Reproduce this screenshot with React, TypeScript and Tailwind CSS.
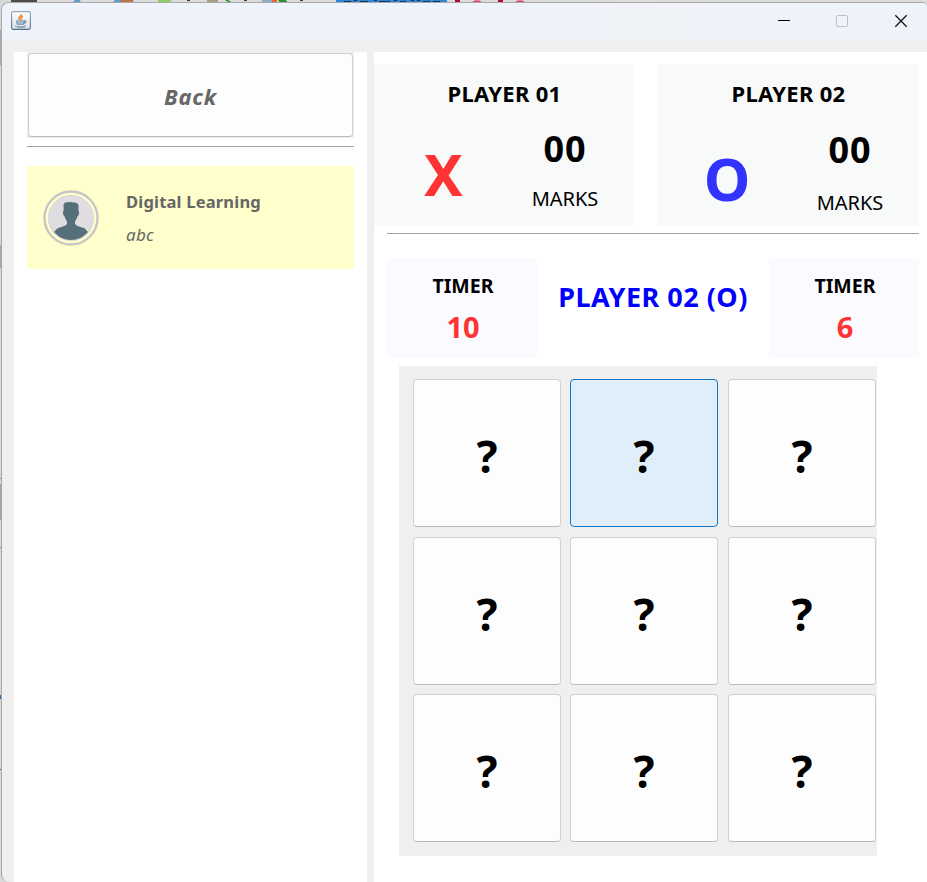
const FONT = "font-['Segoe_UI','Noto_Sans',sans-serif]";

function JavaIcon() {
  return (
    <svg width="20" height="20" viewBox="0 0 20 20" fill="none">
      <defs>
        <linearGradient id="jb" x1="0" y1="0" x2="0" y2="1">
          <stop offset="0" stopColor="#8fa9bd" />
          <stop offset="1" stopColor="#4f6b80" />
        </linearGradient>
        <linearGradient id="jf" x1="0" y1="0" x2="0" y2="1">
          <stop offset="0" stopColor="#ffffff" />
          <stop offset="1" stopColor="#dcdfe2" />
        </linearGradient>
      </defs>
      <rect x="0.6" y="0.6" width="18.8" height="17.8" rx="1.6" fill="url(#jf)" stroke="url(#jb)" strokeWidth="1.1" />
      <path d="M10.400 3.200c.6 1.800-3.400 2.600-2.600 4.400.2.600.8 1 1.200 1.500M12 5.200c-1.600.6-2.600 1.300-1.800 2.400.4.600.2 1.100-.4 1.600" stroke="#ee8a3c" strokeWidth="1.600" />
      <path d="M5.600 10h7.600l-.6 3.200H6.400zM13.200 9.800c2-.5 2.200 1.900-.4 2.400" stroke="#6d8ea8" strokeWidth="1.200" />
      <path d="M6 11.600h6.600" stroke="#9db5c6" strokeWidth="1.400" />
      <path d="M4 14.800c1.600 1.300 8.800 1.300 10.800-.2M6.400 16.200c3 .4 6 .3 8.400-.4" stroke="#7f9cb3" strokeWidth="1" />
    </svg>
  );
}

function Avatar() {
  return (
    <svg width="56" height="56" viewBox="0 0 56 56">
      <circle cx="28" cy="28" r="26.500" fill="#ffffcc" stroke="#c6c6c6" strokeWidth="2.400" />
      <circle cx="28" cy="28" r="22.700" fill="#e0dde1" stroke="#cfcccf" strokeWidth="0.600" />
      <path
        d="M20.500 14.500L22 12.600L26 12L32 12.400L34.600 13.500L35.600 16L35.300 20.500L36.200 22L35.700 25L34.400 26.500L33.300 29.500L32 31.500V34L34 35.800L41.500 38.200L45 42C40.500 47 35 50 28 50S15.500 47 11 42L14.500 38.200L22 35.800L24 34V31.500L22.700 29.500L21.600 26.500L20.300 25L19.800 22L20.700 20.500Z"
        fill="#56707b"
      />
    </svg>
  );
}

function Backdrop() {
  return (
    <svg className="absolute inset-0" width="927" height="882">
      <rect width="927" height="882" fill="#d8d8d8" />
      <rect x="11" width="26" height="3" fill="#4b4b4b" />
      <rect x="37" width="900" height="3" fill="#dcdcdc" />
      <path d="M72 3l3-3h5l1 3zM112 3l3-3h6v3z" fill="#5f9cc8" />
      <path d="M121 0h12l1 3h-14z" fill="#b9744a" />
      <path d="M158 0h14l-3 3h-11z" fill="#8fcd6a" />
      <path d="M207 0h11v3h-11z" fill="#a99f80" />
      <path d="M225 0l4 3h4l-5-3zM278 0h8l2 3h-8z" fill="#2f9232" />
      <path d="M262 0h15v3h-15z" fill="#91adc3" />
      <path d="M272 0h5v2h-5z" fill="#ee6432" />
      <path d="M187 0h3v1h-3zM244 0h3v1h-3zM300 0h3v1h-3z" fill="#333" />
      <rect x="336" width="111" height="3" fill="#2f86d6" />
      <path d="M344 1.500h7M354 0.500h3M360 1.500h8M374 0.500h3M379 1.500h11M394 0.500h3M400 1.500h6M411 0.500h3M417 0.500h3M423 1.500h7M433 1.500h7" stroke="#15324f" strokeWidth="1" />
      <path d="M455 0h5v3h-5zM498 0h5v3h-5z" fill="#b1093c" />
      <path d="M472 3q5-4 10 0M515 3q5-4 10 0" stroke="#d83a5d" strokeWidth="1.500" fill="none" />
      <rect y="30" width="2" height="35" fill="#a9a9a9" />
      <rect y="245" width="2" height="23" fill="#a5a5a5" />
      <rect y="478" width="2" height="1" fill="#8f8f8f" />
      <rect y="484" width="2" height="36" fill="#a2a2a2" />
      <rect y="547" width="2" height="1" fill="#8f8f8f" />
      <rect y="695" width="2" height="4" fill="#2c6cb0" />
      <rect y="769" width="1" height="1" fill="#9a3b75" />
    </svg>
  );
}

function TitleBar() {
  return (
    <div className="flex h-[37px] shrink-0 items-start bg-linear-to-r from-[#eef3fc] from-50% via-[#f0f2f7] via-68% to-[#eef3fc]">
      <div className="ml-[9px] mt-2">
        <JavaIcon />
      </div>
      <svg className="ml-auto mr-[19px] mt-[11px]" width="130" height="14" viewBox="0 0 130 14" fill="none">
        <path d="M0 6.500H12" stroke="#000" />
        <rect x="58.500" y="1.500" width="11" height="11" rx="1" stroke="#bdbfc4" />
        <path d="M117.300 1.300L128.700 12.700M128.700 1.300L117.300 12.700" stroke="#111" strokeWidth="1.300" />
      </svg>
    </div>
  );
}

function Sidebar() {
  return (
    <aside className="w-[353px] bg-white px-[13px] text-[#666666]">
      <div className="h-[86px] bg-[#efefef] p-px">
        <button className="block h-[84px] w-[325px] rounded-[4px] border border-[#d0d0d0] border-b-[#bababa] bg-[#fdfdfd] pt-[3px] text-[22px] font-bold italic tracking-[0.8px]">
          Back
        </button>
      </div>
      <div className="mt-2 h-px bg-[#a0a0a0]" />
      <div className="mt-[19px] flex h-[103px] bg-[#ffffcc] pl-4">
        <div className="mt-6">
          <Avatar />
        </div>
        <div className="ml-[27px] mt-[19px]">
          <div className="text-[16.5px] font-bold leading-[33px] tracking-[0.2px]">Digital Learning</div>
          <div className="text-[17px] italic leading-[33px] tracking-[0.3px]">abc</div>
        </div>
      </div>
    </aside>
  );
}

function Cell({ active }: { active: boolean }) {
  return (
    <button
      className={
        "h-[148px] w-[148px] rounded-[4px] border pt-1.5 text-[44px] font-bold leading-none text-black " +
        (active ? "border-[#0f78cb] bg-[#e0eef9]" : "border-[#d0d0d0] border-b-[#bababa] bg-[#fdfdfd]")
      }
    >
      ?
    </button>
  );
}

function Board() {
  return (
    <div className="ml-[25px] mt-2 grid h-[490px] w-[478px] grid-cols-[157px_158px_148px] grid-rows-[158px_157px_148px] bg-[#efefef] pl-3.5 pt-[13px]">
      {Array.from({ length: 9 }, (_, i) => (
        <Cell key={i} active={i === 1} />
      ))}
    </div>
  );
}

function Timer({ value }: { value: string }) {
  return (
    <div className="h-[100px] w-[150px] bg-[#fbfaff] pl-[2px] text-center font-bold">
      <div className="text-[19.5px] leading-[56px] text-black">TIMER</div>
      <div className="text-[29px] leading-[26px] text-[#ff3333]">{value}</div>
    </div>
  );
}

function Game() {
  return (
    <main className="w-[553px] bg-white pt-3 text-black">
      <div className="flex">
        <section className="h-[162px] w-[260px] bg-[#f8faf9] text-center">
          <div className="pl-px text-[22px] font-bold leading-[59px] tracking-[0.3px]">PLAYER 01</div>
          <div className="flex">
            <div className="mt-[11px] w-[139px] text-[58px] font-bold leading-[80px] text-[#ff3333]">X</div>
            <div className="w-[104px]">
              <div className="mt-[6px] text-[36px] font-bold leading-10 tracking-[1px]">00</div>
              <div className="mt-[15px] text-[20px] leading-[30px]">MARKS</div>
            </div>
          </div>
        </section>
        <section className="ml-[23px] h-[162px] w-[262px] bg-[#f8faf9] text-center">
          <div className="pl-px text-[22px] font-bold leading-[59px] tracking-[0.3px]">PLAYER 02</div>
          <div className="flex">
            <div className="mt-[15px] w-[140px] text-[59px] font-bold leading-[80px] text-[#3333ff]">O</div>
            <div className="w-[106px]">
              <div className="mt-[7px] text-[36px] font-bold leading-10 tracking-[1px]">00</div>
              <div className="mt-[18px] text-[20px] leading-[30px]">MARKS</div>
            </div>
          </div>
        </section>
      </div>
      <div className="ml-[13px] mt-[7px] h-px w-[532px] bg-[#a0a0a0]" />
      <div className="ml-[13px] mt-6 flex w-[532px]">
        <Timer value="10" />
        <div className="flex-1 text-center text-[27px] font-bold leading-[77px] tracking-[0.5px] text-[#0000ff]">PLAYER 02 (O)</div>
        <Timer value="6" />
      </div>
      <Board />
    </main>
  );
}

export default function App() {
  return (
    <div className={"relative h-[882px] w-[927px] overflow-hidden " + FONT}>
      <Backdrop />
      <div className="relative ml-px mt-[2px] flex h-[880px] w-[926px] flex-col overflow-hidden rounded-l-[8px] rounded-tr-[5px] border-l border-t border-[#a9a9a9] bg-[#efefef]">
        <TitleBar />
        <div className="mt-3 flex flex-1 gap-[7px] pl-3">
          <Sidebar />
          <Game />
        </div>
      </div>
    </div>
  );
}
